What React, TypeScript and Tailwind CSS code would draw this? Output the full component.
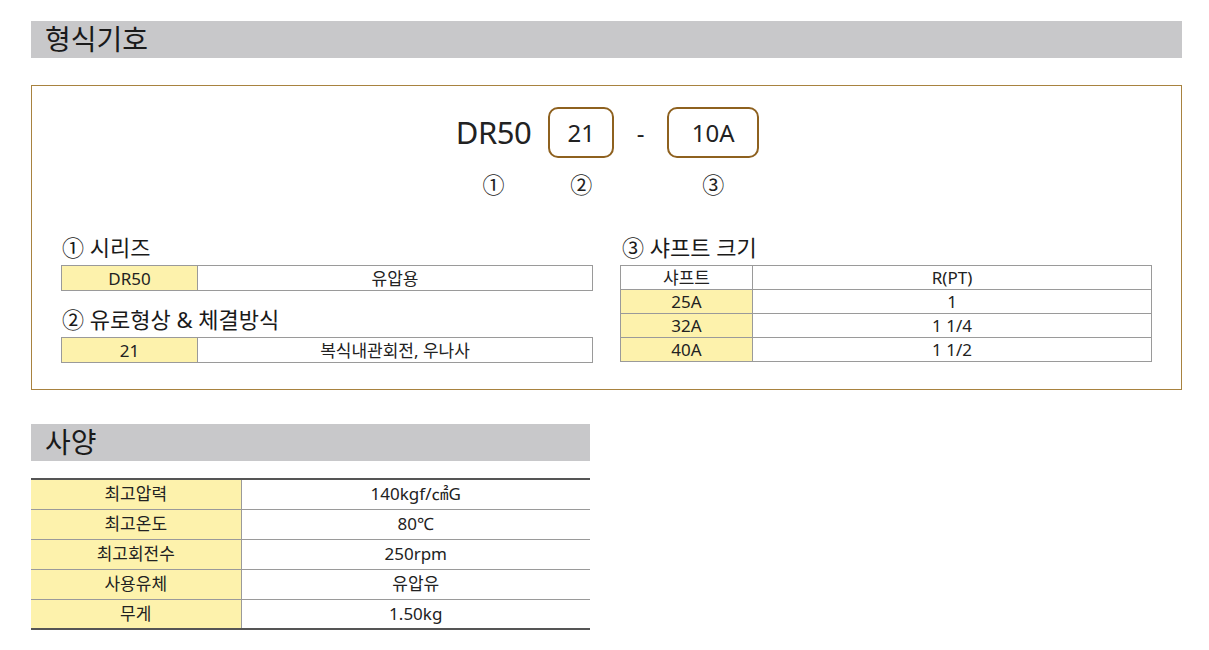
const font = { fontFamily: '"Noto Sans", "Noto Sans CJK KR", sans-serif' };

const specs = [
  { label: "최고압력", value: "140kgf/㎠G" },
  { label: "최고온도", value: "80℃" },
  { label: "최고회전수", value: "250rpm" },
  { label: "사용유체", value: "유압유" },
  { label: "무게", value: "1.50kg" },
];

const shafts = [
  { size: "25A", pt: "1" },
  { size: "32A", pt: "1 1/4" },
  { size: "40A", pt: "1 1/2" },
];

const SectionHeader = ({ title, width }: { title: string; width: string }) => (
  <div className={`${width} h-[37px] bg-[#c8c8ca] pl-[14px] text-[28px] leading-[37px] text-[#1a1a1a]`}>
    {title}
  </div>
);

const SingleRow = ({ code, text }: { code: string; text: string }) => (
  <table className="w-full border-collapse text-[17px] text-[#222]">
    <tbody>
      <tr className="h-[25px]">
        <td className="w-[136px] border border-[#9a9a9a] bg-[#fdf2ac] text-center leading-[23px]">{code}</td>
        <td className="border border-[#9a9a9a] text-center leading-[23px]">{text}</td>
      </tr>
    </tbody>
  </table>
);

const CodeItem = ({ mark, children }: { mark: string; children: React.ReactNode }) => (
  <div className="flex flex-col items-center">
    {children}
    <div className="mt-[13px] text-[22px] leading-[26px] text-[#222]">{mark}</div>
  </div>
);

export default function App() {
  return (
    <div className="bg-white pl-[31px] pt-[21px] w-[1209px] h-[650px]" style={font}>
      <SectionHeader title="형식기호" width="w-[1151px]" />

      <div className="mt-[27px] h-[305px] w-[1151px] border border-[#a8823f]">
        {/* code */}
        <div className="flex justify-center items-start pt-[21px] pl-[2px]">
          <CodeItem mark="①">
            <div className="h-[51px] flex items-center text-[31px] text-[#222] tracking-[-0.5px]">DR50</div>
          </CodeItem>
          <div className="w-[17px]" />
          <CodeItem mark="②">
            <div className="h-[51px] w-[66px] rounded-[10px] border-2 border-[#8e611f] flex items-center justify-center text-[24px] text-[#222]">
              21
            </div>
          </CodeItem>
          <div className="h-[51px] w-[53px] flex items-center justify-center text-[24px] text-[#222]">-</div>
          <CodeItem mark="③">
            <div className="h-[51px] w-[92px] rounded-[10px] border-2 border-[#8e611f] flex items-center justify-center text-[24px] text-[#222]">
              10A
            </div>
          </CodeItem>
        </div>

        {/* tables */}
        <div className="mt-[36px] flex gap-[27px] pl-[29px]">
          <div className="w-[532px]">
            <div className="text-[22px] leading-[28px] text-[#1a1a1a] pl-[1px]">① 시리즈</div>
            <div className="mt-[4px]">
              <SingleRow code="DR50" text="유압용" />
            </div>
            <div className="mt-[14px] text-[22px] leading-[28px] text-[#1a1a1a] pl-[1px]">② 유로형상 &amp; 체결방식</div>
            <div className="mt-[4px]">
              <SingleRow code="21" text="복식내관회전, 우나사" />
            </div>
          </div>

          <div className="w-[532px]">
            <div className="text-[22px] leading-[28px] text-[#1a1a1a] pl-[2px]">③ 샤프트 크기</div>
            <table className="mt-[4px] w-full border-collapse text-[17px] text-[#222]">
              <tbody>
                <tr className="h-[24px]">
                  <td className="w-[132px] border border-[#9a9a9a] text-center leading-[22px]">샤프트</td>
                  <td className="border border-[#9a9a9a] text-center leading-[22px]">R(PT)</td>
                </tr>
                {shafts.map((s) => (
                  <tr key={s.size} className="h-[24px]">
                    <td className="border border-[#9a9a9a] bg-[#fdf2ac] text-center leading-[22px]">{s.size}</td>
                    <td className="border border-[#9a9a9a] text-center leading-[22px]">{s.pt}</td>
                  </tr>
                ))}
              </tbody>
            </table>
          </div>
        </div>
      </div>

      <div className="mt-[34px]">
        <SectionHeader title="사양" width="w-[559px]" />
      </div>

      <table className="mt-[17px] w-[559px] border-collapse text-[17px] text-[#222] border-t-2 border-b-2 border-[#555]">
        <tbody>
          {specs.map((s, i) => (
            <tr key={s.label} className={`h-[30px] ${i > 0 ? "border-t border-[#9a9a9a]" : ""}`}>
              <td className="w-[210px] bg-[#fdf2ac] border-r border-[#9a9a9a] text-center leading-[28px]">{s.label}</td>
              <td className="text-center leading-[28px]">{s.value}</td>
            </tr>
          ))}
        </tbody>
      </table>
    </div>
  );
}
